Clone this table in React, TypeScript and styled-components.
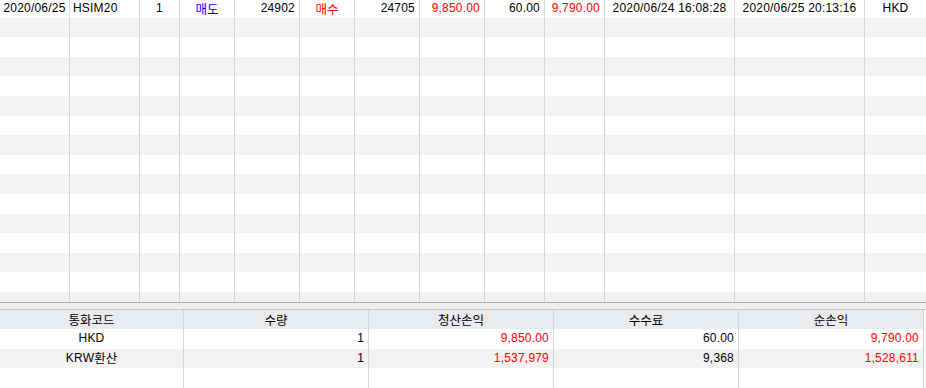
import React from "react";
import styled, { createGlobalStyle } from "styled-components";

const GlobalStyle = createGlobalStyle`
  html, body {
    margin: 0;
    padding: 0;
    background: #ffffff;
    overflow: hidden;
  }
  * {
    box-sizing: border-box;
  }
`;

const FONT = `"Liberation Sans", "Noto Sans CJK KR", sans-serif`;

type Align = "left" | "center" | "right";

interface Col {
  width: number | string;
  align: Align;
}

// 상단 체결내역 컬럼
const columns: Col[] = [
  { width: 70, align: "center" },
  { width: 70, align: "left" },
  { width: 40, align: "center" },
  { width: 55, align: "center" },
  { width: 65, align: "right" },
  { width: 55, align: "center" },
  { width: 65, align: "right" },
  { width: 65, align: "right" },
  { width: 60, align: "right" },
  { width: 60, align: "right" },
  { width: 130, align: "center" },
  { width: 130, align: "center" },
  { width: "1fr", align: "center" },
];

const gridTemplate = columns
  .map((c) => (typeof c.width === "number" ? `${c.width}px` : c.width))
  .join(" ");

interface CellData {
  text: string;
  color?: string;
  ko?: boolean;
}

const firstRow: CellData[] = [
  { text: "2020/06/25" },
  { text: "HSIM20" },
  { text: "1" },
  { text: "매도", color: "#0000ff", ko: true },
  { text: "24902" },
  { text: "매수", color: "#ff0000", ko: true },
  { text: "24705" },
  { text: "9,850.00", color: "#ff0000" },
  { text: "60.00" },
  { text: "9,790.00", color: "#ff0000" },
  { text: "2020/06/24 16:08:28" },
  { text: "2020/06/25 20:13:16" },
  { text: "HKD" },
];

const ROW_COUNT = 16;

const Page = styled.div`
  width: 926px;
  height: 388px;
  display: flex;
  flex-direction: column;
  font-family: ${FONT};
  font-size: 12px;
  color: #000;
`;

const TradeArea = styled.div`
  height: 302px;
  overflow: hidden;
  flex-shrink: 0;
`;

// 첫 행은 스크롤로 윗부분이 살짝 잘려 보임
const TradeRow = styled.div<{ $odd: boolean; $h: number }>`
  display: grid;
  grid-template-columns: ${gridTemplate};
  height: ${(p) => p.$h}px;
  line-height: ${(p) => p.$h}px;
  background: ${(p) => (p.$odd ? "#f3f3f3" : "#ffffff")};
`;

const Cell = styled.div<{ $align: Align; $color?: string; $last?: boolean }>`
  padding: ${(p) => (p.$align === "left" ? "0 1px 0 3px" : p.$align === "right" ? "0 4px 0 1px" : "0 1px")};
  text-align: ${(p) => p.$align};
  color: ${(p) => p.$color || "#000"};
  white-space: nowrap;
  letter-spacing: 0.2px;
  border-right: ${(p) => (p.$last ? "none" : "1px solid #d6d6d6")};
`;

const Ko = styled.span`
  display: inline-block;
  font-family: "Noto Sans CJK KR", sans-serif;
  font-size: 12.5px;
  line-height: 14px;
  vertical-align: middle;
  letter-spacing: 0;
`;

const Splitter = styled.div`
  flex-shrink: 0;
  height: 8px;
  background: #f0f0f0;
  border-top: 1px solid #ababab;
  border-bottom: 1px solid #c9c9c9;
`;

const Summary = styled.div`
  width: 924px;
  display: flex;
  flex-direction: column;
  border-bottom: 1px solid #d4d4d4;
`;

const SummaryGrid = styled.div<{ $bg: string; $h: number }>`
  display: grid;
  grid-template-columns: 184px 185px 185px 185px 185px;
  height: ${(p) => p.$h}px;
  background: ${(p) => p.$bg};
`;

const SumCell = styled.div<{ $align: Align; $color?: string; $h: number }>`
  line-height: ${(p) => p.$h}px;
  padding: 0 4px;
  text-align: ${(p) => p.$align};
  color: ${(p) => p.$color || "#000"};
  white-space: nowrap;
  letter-spacing: 0.2px;
  border-right: 1px solid #d4d4d4;
`;

const RED = "#ff0000";

const summaryHeader = ["통화코드", "수량", "청산손익", "수수료", "순손익"];

interface SumRow {
  code: React.ReactNode;
  qty: string;
  pnl: string;
  fee: string;
  net: string;
}

const summaryRows: (SumRow | null)[] = [
  { code: "HKD", qty: "1", pnl: "9,850.00", fee: "60.00", net: "9,790.00" },
  {
    code: (
      <>
        KRW<Ko>환산</Ko>
      </>
    ),
    qty: "1",
    pnl: "1,537,979",
    fee: "9,368",
    net: "1,528,611",
  },
  null,
];

export default function App() {
  return (
    <>
      <GlobalStyle />
      <Page>
        <TradeArea>
          {Array.from({ length: ROW_COUNT }).map((_, r) => (
            <TradeRow key={r} $odd={r % 2 === 1} $h={r === 0 ? 17.6 : 19.6}>
              {columns.map((c, i) => {
                const d = r === 0 ? firstRow[i] : undefined;
                return (
                  <Cell
                    key={i}
                    $align={c.align}
                    $color={d?.color}
                    $last={i === columns.length - 1}
                  >
                    {d ? d.ko ? <Ko>{d.text}</Ko> : d.text : ""}
                  </Cell>
                );
              })}
            </TradeRow>
          ))}
        </TradeArea>
        <Splitter />
        <Summary>
          <SummaryGrid $bg="#e8ebef" $h={19}>
            {summaryHeader.map((h) => (
              <SumCell key={h} $align="center" $h={19}>
                <Ko>{h}</Ko>
              </SumCell>
            ))}
          </SummaryGrid>
          {summaryRows.map((row, i) => (
            <SummaryGrid key={i} $bg={i % 2 === 1 ? "#f3f3f3" : "#ffffff"} $h={19.6}>
              <SumCell $align="center" $h={19.6}>{row?.code}</SumCell>
              <SumCell $align="right" $h={19.6}>{row?.qty}</SumCell>
              <SumCell $align="right" $h={19.6} $color={RED}>{row?.pnl}</SumCell>
              <SumCell $align="right" $h={19.6}>{row?.fee}</SumCell>
              <SumCell $align="right" $h={19.6} $color={RED}>{row?.net}</SumCell>
            </SummaryGrid>
          ))}
        </Summary>
      </Page>
    </>
  );
}
